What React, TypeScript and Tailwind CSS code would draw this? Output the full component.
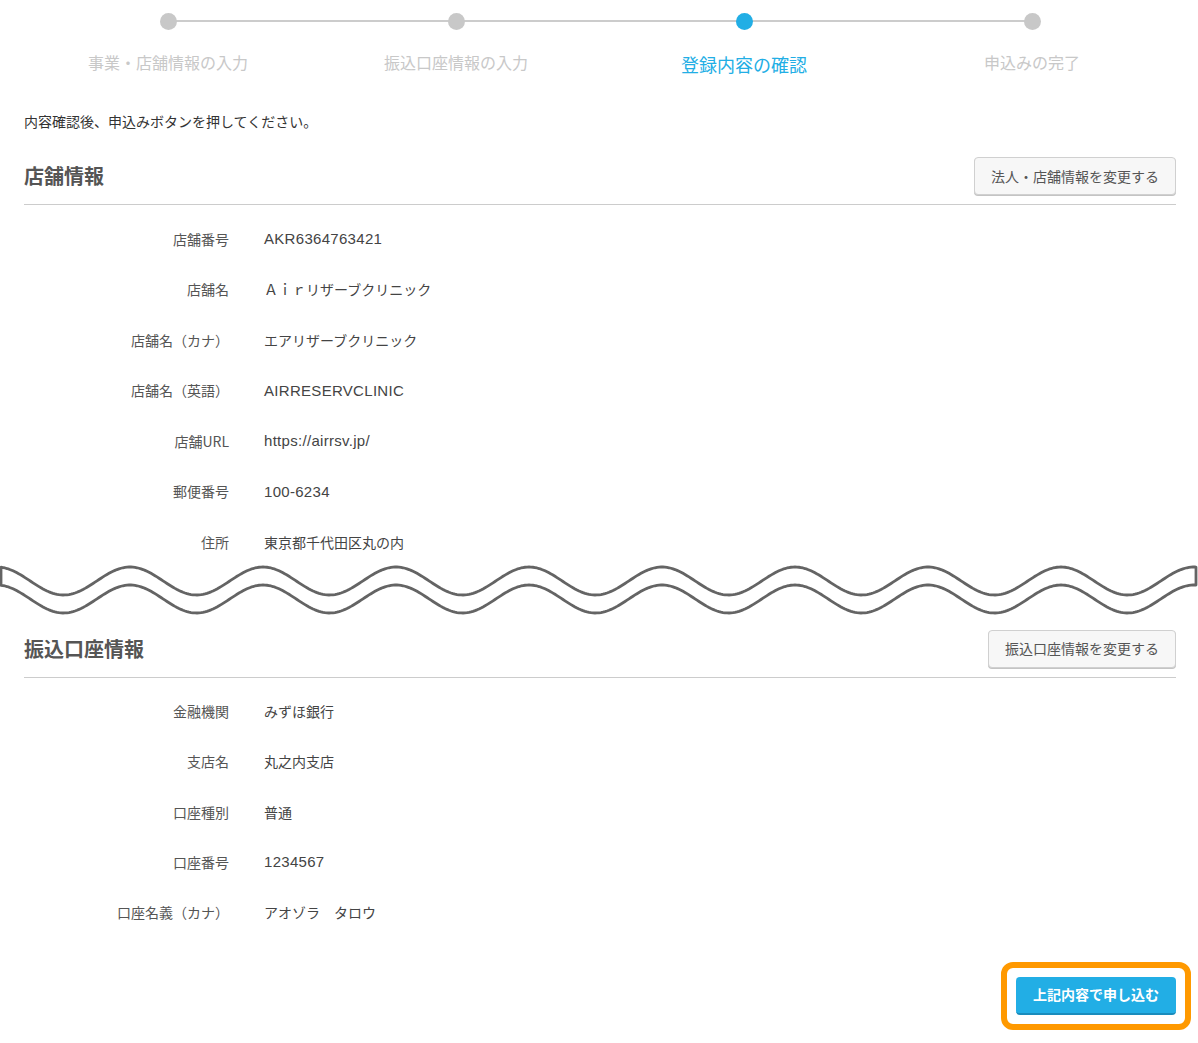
import { FC } from 'react';

interface Row {
  label: string;
  value: string;
  latin?: boolean;
}

const steps = [
  { label: '事業・店舗情報の入力', active: false },
  { label: '振込口座情報の入力', active: false },
  { label: '登録内容の確認', active: true },
  { label: '申込みの完了', active: false },
];

const shopRows: Row[] = [
  { label: '店舗番号', value: 'AKR6364763421', latin: true },
  { label: '店舗名', value: 'Ａｉｒリザーブクリニック' },
  { label: '店舗名（カナ）', value: 'エアリザーブクリニック' },
  { label: '店舗名（英語）', value: 'AIRRESERVCLINIC', latin: true },
  { label: '店舗URL', value: 'https://airrsv.jp/', latin: true },
  { label: '郵便番号', value: '100-6234', latin: true },
  { label: '住所', value: '東京都千代田区丸の内' },
];

const bankRows: Row[] = [
  { label: '金融機関', value: 'みずほ銀行' },
  { label: '支店名', value: '丸之内支店' },
  { label: '口座種別', value: '普通' },
  { label: '口座番号', value: '1234567', latin: true },
  { label: '口座名義（カナ）', value: 'アオゾラ　タロウ' },
];

// 波線（省略表示）
const buildWave = () => {
  const period = 133;
  const amp = 14;
  const wave = (x: number, c: number) =>
    c - amp * Math.cos((2 * Math.PI * (x + 3)) / period);
  const xs: number[] = [];
  for (let x = 1; x <= 1196; x += 2) xs.push(x);
  if (xs[xs.length - 1] !== 1196) xs.push(1196);
  const top = xs.map((x, i) => `${i === 0 ? 'M' : 'L'}${x} ${wave(x, 16).toFixed(2)}`);
  const bottom = [...xs].reverse().map((x) => `L${x} ${wave(x, 34).toFixed(2)}`);
  return `${top.join(' ')} ${bottom.join(' ')} Z`;
};

const wavePath = buildWave();

const SectionHeader: FC<{ title: string; button: string }> = ({ title, button }) => (
  <div className="flex items-center justify-between border-b border-[#cccccc] pb-[9px]">
    <h2 className="text-[20px] font-bold text-[#555555] leading-[30px]">{title}</h2>
    <button className="h-[38px] px-[16px] bg-[#f7f7f7] border border-[#d0d0d0] rounded-[4px] shadow-[0_1px_0_#c4c4c4] text-[14px] text-[#555555]">
      {button}
    </button>
  </div>
);

const Rows: FC<{ rows: Row[]; rowClass: string }> = ({ rows, rowClass }) => (
  <div className="pt-[9px]">
    {rows.map((row) => (
      <div key={row.label} className={`flex items-center ${rowClass}`}>
        <div className="w-[205px] text-right text-[14px] text-[#555555]">{row.label}</div>
        <div
          className={
            row.latin
              ? "ml-[35px] text-[15px] tracking-[0.3px] text-[#444444] font-['Liberation_Sans','Noto_Sans_CJK_JP',sans-serif]"
              : 'ml-[35px] text-[14px] text-[#444444]'
          }
        >
          {row.value}
        </div>
      </div>
    ))}
  </div>
);

const App: FC = () => {
  return (
    <div className="w-[1198px] min-h-[1043px] bg-white font-['Noto_Sans_CJK_JP','Noto_Sans',sans-serif]">
      {/* ステップ表示 */}
      <div className="pl-6 pr-[22px]">
        <div className="relative grid grid-cols-4 pt-[13px]">
          <div className="absolute left-[144px] right-[144px] top-[20px] h-[2px] bg-[#cccccc]" />
          {steps.map((step) => (
            <div key={step.label} className="relative flex flex-col items-center">
              <div
                className={
                  step.active
                    ? 'w-[17px] h-[17px] rounded-full bg-[#22aee5]'
                    : 'w-[17px] h-[17px] rounded-full bg-[#c8c8c8]'
                }
              />
              {step.active ? (
                <div className="mt-[22px] text-[18px] leading-[24px] text-[#22aee5]">{step.label}</div>
              ) : (
                <div className="mt-[20px] text-[16px] leading-[24px] text-[#c8c8c8]">{step.label}</div>
              )}
            </div>
          ))}
        </div>

        <p className="mt-[35px] text-[14px] leading-[20px] text-[#333333]">
          内容確認後、申込みボタンを押してください。
        </p>

        {/* 店舗情報 */}
        <div className="mt-[26px]">
          <SectionHeader title="店舗情報" button="法人・店舗情報を変更する" />
          <Rows rows={shopRows} rowClass="h-[50.5px]" />
        </div>
      </div>

      <svg width="1198" height="52" viewBox="0 0 1198 52" className="block -mt-[3px] overflow-visible">
        <path d={wavePath} fill="white" stroke="#646464" strokeWidth="2.8" strokeLinejoin="round" />
      </svg>

      <div className="pl-6 pr-[22px]">
        {/* 振込口座情報 */}
        <div className="mt-[13px]">
          <SectionHeader title="振込口座情報" button="振込口座情報を変更する" />
          <Rows rows={bankRows} rowClass="h-[50.25px]" />
        </div>

        <div className="mt-[24px] flex justify-end -mr-[15px]">
          <div className="border-[6px] border-[#ff9900] rounded-[12px] p-[9px]">
            <button className="h-[38px] w-[160px] bg-[#22aee5] rounded-[4px] border-b-2 border-[#1a8cbc] text-[14px] font-semibold text-white">
              上記内容で申し込む
            </button>
          </div>
        </div>
      </div>
    </div>
  );
};

export default App;
